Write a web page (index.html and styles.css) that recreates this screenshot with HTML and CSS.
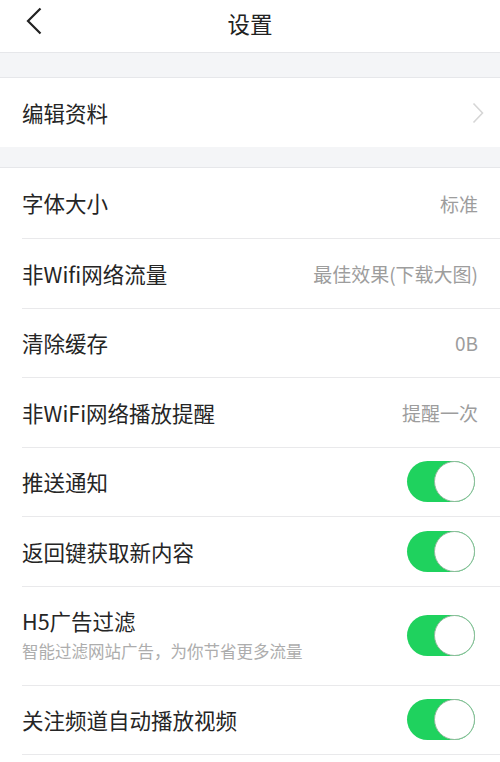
FILE: index.html
```html
<!DOCTYPE html>
<html lang="zh-CN">
<head>
    <meta charset="UTF-8">
    <meta name="viewport" content="width=device-width, initial-scale=1.0">
    <title>设置</title>
    <link rel="stylesheet" href="styles.css">
</head>
<body>
    <div class="header">
        <svg class="back" width="18" height="28" viewBox="0 0 18 28">
            <path d="M15.5 1.5 L3 14 L15.5 26.5" fill="none" stroke="#222" stroke-width="2.2"/>
        </svg>
        <h1>设置</h1>
    </div>
    <div class="gap gap-top"></div>
    <div class="group">
        <div class="row single">
            <span class="label">编辑资料</span>
            <svg class="arrow" width="12" height="22" viewBox="0 0 12 22">
                <path d="M1.5 1.5 L10.5 11 L1.5 20.5" fill="none" stroke="#d6d6d6" stroke-width="1.6"/>
            </svg>
        </div>
    </div>
    <div class="gap"></div>
    <div class="group">
        <div class="row first">
            <span class="label">字体大小</span>
            <span class="value">标准</span>
        </div>
        <div class="row">
            <span class="label">非Wifi网络流量</span>
            <span class="value">最佳效果(下载大图)</span>
        </div>
        <div class="row">
            <span class="label">清除缓存</span>
            <span class="value">0B</span>
        </div>
        <div class="row">
            <span class="label">非WiFi网络播放提醒</span>
            <span class="value">提醒一次</span>
        </div>
        <div class="row">
            <span class="label">推送通知</span>
            <span class="switch"><span class="knob"></span></span>
        </div>
        <div class="row">
            <span class="label">返回键获取新内容</span>
            <span class="switch"><span class="knob"></span></span>
        </div>
        <div class="row tall">
            <div class="text">
                <span class="label">H5广告过滤</span>
                <span class="sub">智能过滤网站广告，为你节省更多流量</span>
            </div>
            <span class="switch"><span class="knob"></span></span>
        </div>
        <div class="row">
            <span class="label">关注频道自动播放视频</span>
            <span class="switch"><span class="knob"></span></span>
        </div>
    </div>
</body>
</html>
```

FILE: styles.css
```css
body, html {
    margin: 0;
    padding: 0;
    width: 100%;
    height: 100%;
    overflow: hidden;
    background: #fff;
    font-family: "Noto Sans CJK SC", "Noto Sans", sans-serif;
    color: #222;
}
.header {
    height: 52px;
    display: flex;
    align-items: center;
    justify-content: center;
    position: relative;
    border-bottom: 1px solid #e6e7ea;
}
.header h1 {
    margin: 0;
    font-size: 22.5px;
    font-weight: normal;
    line-height: 1;
    margin-top: -6px;
}
.back {
    position: absolute;
    left: 25px;
    top: 7px;
}
.gap {
    height: 20px;
    background: #f4f5f7;
    border-bottom: 1px solid #e6e7ea;
}
.gap-top {
    height: 24px;
}
.group {
    padding-left: 22px;
}
.row {
    height: 68.5px;
    display: flex;
    align-items: center;
    justify-content: space-between;
    padding-right: 22px;
    border-bottom: 1px solid #e9e9eb;
}
.row.first {
    height: 70px;
}
.row.single {
    height: 69px;
    border-bottom: none;
    padding-right: 16px;
}
.row.tall {
    height: 98px;
}
.label {
    font-size: 21.5px;
    line-height: 1;
    color: #252525;
}
.value {
    font-size: 19px;
    color: #9d9d9d;
}
.text {
    display: flex;
    flex-direction: column;
    gap: 11px;
    margin-top: -2px;
}
.sub {
    font-size: 16.5px;
    color: #adadad;
    line-height: 1;
}
.switch {
    width: 68px;
    height: 41px;
    border-radius: 21px;
    background: #1fd25e;
    position: relative;
    margin-right: 3px;
}
.knob {
    position: absolute;
    right: 0;
    top: 0;
    width: 39px;
    height: 39px;
    border-radius: 50%;
    background: #fff;
    border: 1px solid #8fb89a;
}
```
